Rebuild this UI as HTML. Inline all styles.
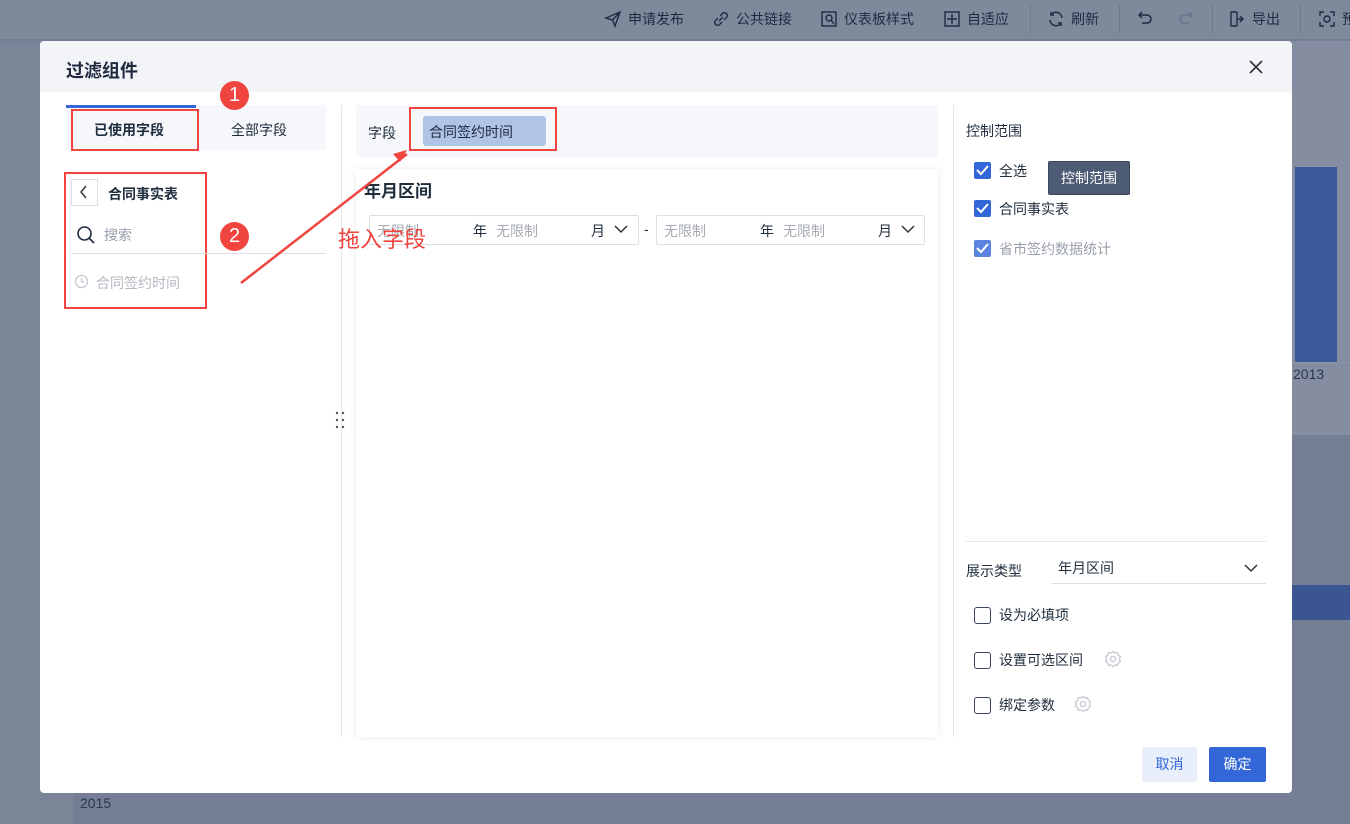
<!DOCTYPE html>
<html><head><meta charset="utf-8"><style>
*{box-sizing:border-box;margin:0;padding:0}
body{width:1350px;height:824px;overflow:hidden;position:relative;background:#747f95;font-family:"Liberation Sans","Noto Sans CJK SC",sans-serif;font-size:14px;color:#1f2d3d}
.abs{position:absolute}
.top{left:0;top:0;width:1350px;height:40px;background:#7f899c;border-bottom:1px solid #6f7a8e}
.tb{top:9px;font-size:14px;color:#1f2a3f;display:flex;align-items:center;gap:6px}
.modal{left:40px;top:41px;width:1252px;height:752px;background:#fff;border-radius:4px;overflow:hidden}
.hd{left:0;top:0;width:1252px;height:51px;background:#f2f4f8}
.red{border:2px solid #f0443f}
.cb{width:17px;height:17px;border-radius:2px;background:#3366d6;display:flex;align-items:center;justify-content:center}
.cbe{width:17px;height:17px;border-radius:3px;border:1.5px solid #3a4660;background:#fff}
.sel{border:1px solid #dcdfe6;height:30px;border-radius:2px}
</style></head><body>
<div class="abs top"></div>
<div class="abs" style="left:0;top:41px;width:73px;height:783px;background:#7b8598"></div>
<div class="abs" style="left:1292px;top:41px;width:58px;height:394px;background:#858ea0"></div>
<div class="abs" style="left:1295px;top:167px;width:42px;height:195px;background:#3c5898"></div>
<div class="abs" style="left:1292px;top:362px;width:58px;height:1px;background:#9098a8"></div>
<div class="abs" style="left:1293px;top:366px;color:#2a3550;font-size:14px">2013</div>
<div class="abs" style="left:1292px;top:585px;width:58px;height:35px;background:#3a5590"></div>
<div class="abs" style="left:80px;top:795px;color:#2a3550;font-size:14px">2015</div>

<div class="abs tb" style="left:604px"><svg width="18" height="18" viewBox="0 0 18 18" fill="none" stroke="#1f2a3f" stroke-width="1.4"><path d="M2 8L16 2L11 16L8.5 10Z M8.5 10L16 2"/></svg>申请发布</div>
<div class="abs tb" style="left:712px"><svg width="18" height="18" viewBox="0 0 18 18" fill="none" stroke="#1f2a3f" stroke-width="1.4"><path d="M8 6l3-3a3 3 0 014 4l-3 3M10 12l-3 3a3 3 0 01-4-4l3-3M7 11l4-4"/></svg>公共链接</div>
<div class="abs tb" style="left:820px"><svg width="18" height="18" viewBox="0 0 18 18" fill="none" stroke="#1f2a3f" stroke-width="1.4"><rect x="2" y="2" width="14" height="14"/><circle cx="9" cy="8" r="3"/><path d="M11 10l3 4"/></svg>仪表板样式</div>
<div class="abs tb" style="left:943px"><svg width="18" height="18" viewBox="0 0 18 18" fill="none" stroke="#1f2a3f" stroke-width="1.4"><rect x="2" y="2" width="14" height="14"/><path d="M9 4v10M4 9h10"/></svg>自适应</div>
<div class="abs" style="left:1030px;top:4px;width:1px;height:30px;background:#707a8e"></div>
<div class="abs tb" style="left:1047px"><svg width="18" height="18" viewBox="0 0 18 18" fill="none" stroke="#1f2a3f" stroke-width="1.5"><path d="M15 8A6 6 0 004 5M3 10a6 6 0 0011 3M4 2v3h3M14 16v-3h-3"/></svg>刷新</div>
<div class="abs" style="left:1119px;top:4px;width:1px;height:30px;background:#707a8e"></div>
<div class="abs tb" style="left:1137px"><svg width="18" height="18" viewBox="0 0 18 18" fill="none" stroke="#1f2a3f" stroke-width="1.5"><path d="M5 3L2 6l3 3M2 6h8a4 4 0 010 8H5"/></svg></div>
<div class="abs tb" style="left:1176px"><svg width="18" height="18" viewBox="0 0 18 18" fill="none" stroke="#6a7489" stroke-width="1.5"><path d="M13 3l3 3-3 3M16 6H8a4 4 0 000 8h5"/></svg></div>
<div class="abs" style="left:1212px;top:4px;width:1px;height:30px;background:#707a8e"></div>
<div class="abs tb" style="left:1228px"><svg width="18" height="18" viewBox="0 0 18 18" fill="none" stroke="#1f2a3f" stroke-width="1.4"><path d="M9 2H3v14h6M9 2v14M12 6l3 3-3 3M10 9h5"/></svg>导出</div>
<div class="abs" style="left:1300px;top:4px;width:1px;height:30px;background:#707a8e"></div>
<div class="abs tb" style="left:1318px"><svg width="18" height="18" viewBox="0 0 18 18" fill="none" stroke="#1f2a3f" stroke-width="1.4"><path d="M2 6V2h4M12 2h4v4M16 12v4h-4M6 16H2v-4"/><circle cx="9" cy="9" r="3"/></svg>预</div>

<div class="abs modal">
 <div class="abs hd"></div>
 <div class="abs" style="left:26px;top:16px;font-size:18px;font-weight:bold;color:#1f2a3f">过滤组件</div>
 <svg class="abs" style="left:1209px;top:19px" width="14" height="14" viewBox="0 0 14 14" stroke="#333" stroke-width="1.6"><path d="M1 1l12 12M13 1L1 13"/></svg>

 <div class="abs" style="left:26px;top:64px;width:260px;height:45px;background:#f5f7fb"></div>
 <div class="abs" style="left:26px;top:64px;width:130px;height:3px;background:#3366d6"></div>
 <div class="abs red" style="left:31px;top:68px;width:128px;height:42px"></div>
 <div class="abs" style="left:54px;top:79px;font-weight:bold;font-size:14px">已使用字段</div>
 <div class="abs" style="left:191px;top:79px;font-size:14px">全部字段</div>
 <div class="abs" style="left:180px;top:40px;width:29px;height:29px;border-radius:50%;background:#f0443f;color:#fff;font-size:20px;text-align:center;line-height:29px">1</div>
 <div class="abs red" style="left:24px;top:131px;width:143px;height:137px"></div>
 <div class="abs" style="left:31px;top:138px;width:27px;height:27px;border:1px solid #dcdfe6"></div>
 <svg class="abs" style="left:39px;top:144px" width="10" height="14" viewBox="0 0 10 14" fill="none" stroke="#333" stroke-width="1.4"><path d="M7 1L2 7l5 6"/></svg>
 <div class="abs" style="left:68px;top:143px;font-weight:bold;font-size:14px">合同事实表</div>
 <svg class="abs" style="left:36px;top:184px" width="20" height="20" viewBox="0 0 20 20" fill="none" stroke="#1f2a3f" stroke-width="1.6"><circle cx="8.5" cy="8.5" r="6.5"/><path d="M13 13l5 5"/></svg>
 <div class="abs" style="left:64px;top:184px;color:#9aa0ab">搜索</div>
 <div class="abs" style="left:31px;top:212px;width:255px;height:1px;background:#dcdfe6"></div>
 <div class="abs" style="left:180px;top:181px;width:29px;height:29px;border-radius:50%;background:#f0443f;color:#fff;font-size:20px;text-align:center;line-height:29px">2</div>
 <svg class="abs" style="left:34px;top:233px" width="15" height="15" viewBox="0 0 15 15" fill="none" stroke="#c5c9d0" stroke-width="1.3"><circle cx="7.5" cy="7.5" r="6"/><path d="M7.5 4v4h3"/></svg>
 <div class="abs" style="left:56px;top:232px;color:#b5b9c2">合同签约时间</div>
 <div class="abs" style="left:301px;top:64px;width:1px;height:632px;background:#e4e6ec"></div>
 <svg class="abs" style="left:295px;top:370px" width="10" height="18" fill="#555"><circle cx="2" cy="2" r="1.2"/><circle cx="8" cy="2" r="1.2"/><circle cx="2" cy="9" r="1.2"/><circle cx="8" cy="9" r="1.2"/><circle cx="2" cy="16" r="1.2"/><circle cx="8" cy="16" r="1.2"/></svg>

 <div class="abs" style="left:316px;top:64px;width:582px;height:52px;background:#f5f7fb"></div>
 <div class="abs" style="left:328px;top:82px">字段</div>
 <div class="abs red" style="left:369px;top:66px;width:148px;height:44px"></div>
 <div class="abs" style="left:383px;top:75px;width:123px;height:30px;background:#b0c4e8;border-radius:3px;padding:6px 6px;color:#1f2a3f">合同签约时间</div>
 <div class="abs" style="left:316px;top:128px;width:582px;height:568px;background:#fff;box-shadow:0 0 8px rgba(0,0,0,.08)"></div>
 <div class="abs" style="left:324px;top:136px;font-size:17px;font-weight:bold">年月区间</div>
 <div class="abs sel" style="left:329px;top:174px;width:270px"></div>
 <div class="abs" style="left:337px;top:180px;color:#a5aab3">无限制</div>
 <div class="abs" style="left:433px;top:180px">年</div>
 <div class="abs" style="left:456px;top:180px;color:#a5aab3">无限制</div>
 <div class="abs" style="left:551px;top:180px">月</div>
 <svg class="abs" style="left:573px;top:182px" width="16" height="12" viewBox="0 0 16 12" fill="none" stroke="#333" stroke-width="1.5"><path d="M2 3l6 6 6-6"/></svg>
 <div class="abs" style="left:604px;top:180px">-</div>
 <div class="abs sel" style="left:616px;top:174px;width:269px"></div>
 <div class="abs" style="left:624px;top:180px;color:#a5aab3">无限制</div>
 <div class="abs" style="left:720px;top:180px">年</div>
 <div class="abs" style="left:743px;top:180px;color:#a5aab3">无限制</div>
 <div class="abs" style="left:838px;top:180px">月</div>
 <svg class="abs" style="left:860px;top:182px" width="16" height="12" viewBox="0 0 16 12" fill="none" stroke="#333" stroke-width="1.5"><path d="M2 3l6 6 6-6"/></svg>
 <div class="abs" style="left:298px;top:186px;color:#f0443f;font-size:22px;line-height:26px">拖入字段</div>
 <svg class="abs" style="left:0;top:0" width="600" height="300"><path d="M201 242L367 113" stroke="#f0443f" stroke-width="2.5"/><path d="M367 109l-14 4 7 8z" fill="#f0443f"/></svg>

 <div class="abs" style="left:913px;top:64px;width:1px;height:632px;background:#e4e6ec"></div>
 <div class="abs" style="left:926px;top:80px">控制范围</div>
 <div class="abs cb" style="left:934px;top:121px"><svg width="13" height="11"><path d="M1 5l4 4 7-8" stroke="#fff" stroke-width="2" fill="none"/></svg></div>
 <div class="abs" style="left:959px;top:120px">全选</div>
 <div class="abs" style="left:1008px;top:120px;width:82px;height:34px;background:#4d5b75;border:1px solid #3a465d;border-radius:2px;color:#fff;text-align:center;line-height:32px">控制范围</div>
 <div class="abs cb" style="left:934px;top:159px"><svg width="13" height="11"><path d="M1 5l4 4 7-8" stroke="#fff" stroke-width="2" fill="none"/></svg></div>
 <div class="abs" style="left:959px;top:158px">合同事实表</div>
 <div class="abs cb" style="left:934px;top:199px;opacity:.8"><svg width="13" height="11"><path d="M1 5l4 4 7-8" stroke="#fff" stroke-width="2" fill="none"/></svg></div>
 <div class="abs" style="left:959px;top:198px;color:#9aa0ab">省市签约数据统计</div>
 <div class="abs" style="left:926px;top:500px;width:300px;height:1px;background:#e4e6ec"></div>
 <div class="abs" style="left:926px;top:520px">展示类型</div>
 <div class="abs" style="left:1018px;top:517px">年月区间</div>
 <svg class="abs" style="left:1203px;top:521px" width="16" height="12" viewBox="0 0 16 12" fill="none" stroke="#333" stroke-width="1.5"><path d="M2 3l6 6 6-6"/></svg>
 <div class="abs" style="left:1011px;top:542px;width:215px;height:1px;background:#dcdfe6"></div>
 <div class="abs cbe" style="left:934px;top:566px"></div>
 <div class="abs" style="left:959px;top:564px">设为必填项</div>
 <div class="abs cbe" style="left:934px;top:611px"></div>
 <div class="abs" style="left:959px;top:609px">设置可选区间</div>
 <svg class="abs" style="left:1064px;top:609px" width="18" height="18" viewBox="0 0 18 18" fill="none" stroke="#c8ccd3" stroke-width="1.4"><path d="M9 1.5l2 1.5 2.5-.3.8 2.4 2 1.5-1 2.4 1 2.4-2 1.5-.8 2.4-2.5-.3-2 1.5-2-1.5-2.5.3-.8-2.4-2-1.5 1-2.4-1-2.4 2-1.5.8-2.4 2.5.3z"/><circle cx="9" cy="9" r="2.6"/></svg>
 <div class="abs cbe" style="left:934px;top:656px"></div>
 <div class="abs" style="left:959px;top:654px">绑定参数</div>
 <svg class="abs" style="left:1034px;top:654px" width="18" height="18" viewBox="0 0 18 18" fill="none" stroke="#c8ccd3" stroke-width="1.4"><path d="M9 1.5l2 1.5 2.5-.3.8 2.4 2 1.5-1 2.4 1 2.4-2 1.5-.8 2.4-2.5-.3-2 1.5-2-1.5-2.5.3-.8-2.4-2-1.5 1-2.4-1-2.4 2-1.5.8-2.4 2.5.3z"/><circle cx="9" cy="9" r="2.6"/></svg>
 <div class="abs" style="left:1102px;top:706px;width:55px;height:35px;background:#e8eefa;border-radius:2px;color:#3366d6;text-align:center;line-height:35px">取消</div>
 <div class="abs" style="left:1169px;top:706px;width:57px;height:35px;background:#3366d6;border-radius:2px;color:#fff;text-align:center;line-height:35px">确定</div>
</div>
</body></html>
